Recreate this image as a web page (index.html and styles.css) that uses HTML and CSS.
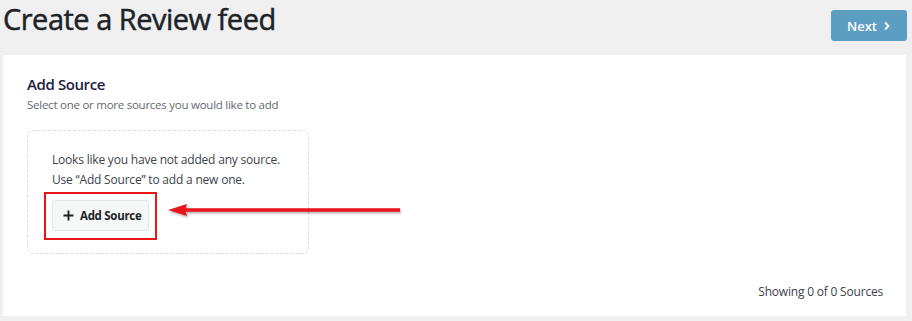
FILE: index.html
```html
<!DOCTYPE html>
<html>
<head>
<meta charset="utf-8">
<link rel="stylesheet" href="styles.css">
</head>
<body>
<div class="page">
  <header class="topbar">
    <h1 class="title">Create a Review feed</h1>
    <button class="next-btn">Next <svg class="chev" width="8" height="10" viewBox="0 0 8 10"><path d="M2 1.5 L5.5 5 L2 8.5" fill="none" stroke="#fff" stroke-width="1.8"/></svg></button>
  </header>
  <section class="card">
    <h2 class="card-title">Add Source</h2>
    <p class="card-sub">Select one or more sources you would like to add</p>
    <div class="empty-row">
      <div class="empty-box">
        <p class="empty-text">Looks like you have not added any source.</p>
        <p class="empty-text">Use “Add Source” to add a new one.</p>
        <div class="btn-wrap">
          <button class="add-btn"><svg class="plus" width="11" height="11" viewBox="0 0 11 11"><path d="M5.5 0.5 V10.5 M0.5 5.5 H10.5" stroke="#1d2327" stroke-width="1.9"/></svg>Add Source</button>
          <span class="highlight"></span>
          <svg class="arrow" width="240" height="20" viewBox="0 0 240 20">
            <defs>
              <filter id="sh" x="-10%" y="-50%" width="120%" height="200%">
                <feDropShadow dx="1" dy="1.5" stdDeviation="0.8" flood-color="#000" flood-opacity="0.35"/>
              </filter>
            </defs>
            <g filter="url(#sh)">
              <path d="M16 8.3 L232 8.3 L232 11.7 L16 11.7 Z" fill="#e8141a"/>
              <path d="M0 10 L19 4 L17 10 L19 16 Z" fill="#e8141a"/>
            </g>
          </svg>
        </div>
      </div>
    </div>
    <div class="card-foot">Showing 0 of 0 Sources</div>
  </section>
</div>
</body>
</html>
```
FILE: styles.css
```css
html, body {
  margin: 0;
  padding: 0;
  background: #f0f0f1;
  font-family: "Open Sans", "Noto Sans", sans-serif;
}
.page {
  width: 912px;
  height: 321px;
  overflow: hidden;
}
.topbar {
  display: flex;
  justify-content: space-between;
  align-items: flex-start;
  height: 55px;
}
.title {
  margin: 0;
  padding: 0 0 0 3px;
  font-size: 29px;
  font-weight: 400;
  line-height: 38px;
  color: #1d2327;
  letter-spacing: -0.5px;
  -webkit-text-stroke: 0.5px #1d2327;
}
.next-btn {
  margin: 10px 5px 0 0;
  width: 76px;
  height: 31px;
  border: none;
  border-radius: 3px;
  background: #5c9ec2;
  color: #fff;
  font-family: "Open Sans", sans-serif;
  font-size: 13px;
  font-weight: 600;
  display: flex;
  align-items: center;
  justify-content: center;
  gap: 6px;
  padding: 0;
}
.chev { display: block; }
.card {
  margin: 0 3px 0 3px;
  width: 903px;
  height: 261px;
  box-sizing: border-box;
  background: #fff;
  padding: 18px 23px 0 24px;
  display: flex;
  flex-direction: column;
}
.card-title {
  margin: 0;
  font-size: 15px;
  font-weight: 600;
  line-height: 22px;
  color: #1d2240;
  letter-spacing: -0.4px;
}
.card-sub {
  margin: 1px 0 0 0;
  font-size: 11.5px;
  line-height: 18px;
  color: #646970;
  letter-spacing: -0.25px;
}
.empty-row {
  margin-top: 16px;
}
.empty-box {
  width: 282px;
  height: 124px;
  box-sizing: border-box;
  border: 1px dashed #dcdcde;
  border-radius: 6px;
  padding: 19px 0 0 24px;
}
.empty-text {
  margin: 0;
  font-size: 12px;
  line-height: 20px;
  color: #3c434a;
  letter-spacing: -0.2px;
}
.btn-wrap {
  position: relative;
  display: inline-block;
  margin-top: 10px;
}
.add-btn {
  display: flex;
  align-items: center;
  gap: 6px;
  height: 31px;
  width: 97px;
  box-sizing: border-box;
  padding: 0 0 0 10px;
  background: #f6f7f7;
  border: 1px solid #e2e4e7;
  border-radius: 3px;
  font-family: "Open Sans", sans-serif;
  font-size: 11.5px;
  font-weight: 700;
  letter-spacing: -0.3px;
  color: #1d2327;
}
.plus {
  display: block;
}
.highlight {
  position: absolute;
  left: -8px;
  top: -8px;
  width: 113px;
  height: 48px;
  box-sizing: border-box;
  border: 2px solid #e8141a;
}
.arrow {
  position: absolute;
  left: 116px;
  top: 0px;
}
.card-foot {
  margin-top: auto;
  margin-bottom: 14px;
  text-align: right;
  font-size: 12px;
  line-height: 20px;
  color: #3c434a;
  letter-spacing: -0.2px;
}
```
